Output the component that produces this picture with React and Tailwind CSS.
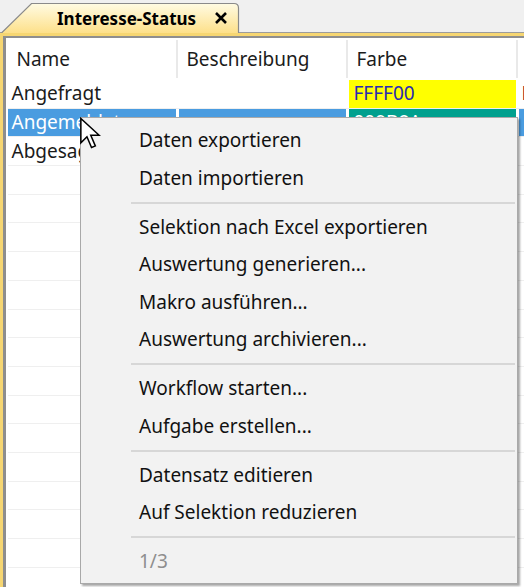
import React from "react";

const rows = [
  { name: "Angefragt", farbe: "FFFF00", cell: "bg-[#ffff00] text-[#2a2ab4]", extra: "FF", extraText: "text-[#7a0a24]" },
  { name: "Angemeldet", farbe: "009B8A", selected: true, cell: "bg-[#00a08e] text-white" },
  { name: "Abgesagt" },
];

const menu = [
  ["Daten exportieren", "Daten importieren"],
  [
    "Selektion nach Excel exportieren",
    "Auswertung generieren...",
    "Makro ausführen...",
    "Auswertung archivieren...",
  ],
  ["Workflow starten...", "Aufgabe erstellen..."],
  ["Datensatz editieren", "Auf Selektion reduzieren"],
];

const ContextMenu = () => (
  <div className="absolute left-[80px] top-[117px] w-[438px] h-[467px] bg-[#f2f2f2] border border-[#a9a9a9] shadow-[2px_2px_2px_rgba(0,0,0,0.35)] pt-[4px]">
    {menu.map((group, gi) => (
      <div key={gi}>
        {group.map((label) => (
          <div key={label} className="h-[37.5px] flex items-center pl-[58px] text-[#111]">
            {label}
          </div>
        ))}
        <div className="h-[11.5px] flex items-center ml-[50px] mr-[2px]">
          <div className="h-[2px] w-full bg-[#d7d7d7]" />
        </div>
      </div>
    ))}
    <div className="h-[37.5px] flex items-center pl-[58px] text-[#8e8e8e]">1/3</div>
  </div>
);

const Cursor = () => (
  <svg className="absolute left-[79px] top-[117px]" width="22" height="32" viewBox="0 0 14 21">
    <path
      d="M1 1 L1 17 L5 13 L8 20 L10.5 19 L7.5 12 L13 12 Z"
      fill="#fff"
      stroke="#000"
      strokeWidth="1"
      strokeLinejoin="miter"
    />
  </svg>
);

export default function App() {
  return (
    <div
      className="relative w-[524px] h-[587px] bg-[#f0f0f0] overflow-hidden text-[19px] leading-none"
      style={{ fontFamily: '"Noto Sans", "Open Sans", sans-serif' }}
    >
      {/* tab strip */}
      <div className="h-[32px] relative">
        <div className="absolute left-0 top-0 w-[242px] h-[33px]">
          <svg className="absolute inset-0" width="242" height="33" viewBox="0 0 242 33">
            <defs>
              <linearGradient id="tabFill" x1="0" y1="0" x2="0" y2="1">
                <stop offset="0" stopColor="#fffbe3" />
                <stop offset="1" stopColor="#fde08a" />
              </linearGradient>
            </defs>
            <path
              d="M1.5 33 L31.5 3.5 L234 3.5 Q238.5 3.5 238.5 8 L238.5 33"
              fill="url(#tabFill)"
              stroke="#8a8a8a"
              strokeWidth="1.2"
            />
          </svg>
          <div className="relative flex items-center h-full pt-[3px]">
            <span className="ml-[57px] text-[17px] font-bold text-black">Interesse-Status</span>
            <svg className="ml-[18px]" width="14" height="14" viewBox="0 0 14 14">
              <path d="M2 2 L12 12 M12 2 L2 12" stroke="#000" strokeWidth="2.6" />
            </svg>
          </div>
        </div>
      </div>

      {/* document frame */}
      <div className="h-px bg-[#9c9c9c]" />
      <div className="h-[3px] bg-[#f6d672]" />
      <div className="flex h-[551px]">
        <div className="w-[3px] bg-[#f6d672]" />
        <div className="flex-1 border-l-[3px] border-t-2 border-[#8e8e8e] bg-white pl-[1.5px] overflow-hidden">
          {/* header */}
          <div className="flex h-[42px] text-[#1b1b1b]">
            {["Name", "Beschreibung", "Farbe"].map((h) => (
              <div key={h} className="w-[170px] shrink-0 flex items-center py-[2px]">
                <span className="flex-1 pl-[9px]">{h}</span>
                <div className="w-[2px] h-full bg-[#e9e9e9]" />
              </div>
            ))}
            <div className="flex-1" />
          </div>

          {/* rows */}
          {Array.from({ length: 18 }).map((_, i) => {
            const r = rows[i] || {};
            const sel = r.selected;
            return (
              <div key={i} className="flex h-[28.7px] border-b-[1.5px] border-[#efefef]">
                <div className="w-[170px] shrink-0 pr-[2px]">
                  <div className={`h-full flex items-center pl-[4px] ${sel ? "bg-[#4a9ce0] text-white" : "text-[#1b1b1b]"}`}>
                    {r.name}
                  </div>
                </div>
                <div className="w-[170px] shrink-0 pl-px pr-[2px]">
                  <div className={`h-full ${sel ? "bg-[#4a9ce0]" : ""}`} />
                </div>
                <div className="w-[170px] shrink-0 pl-px pr-[2px]">
                  <div className={`h-full flex items-center pl-[5px] ${r.cell || ""}`}>{r.farbe}</div>
                </div>
                <div className="flex-1 pl-px">
                  <div className={`h-full flex items-center pl-[3px] whitespace-nowrap ${sel ? "bg-[#4a9ce0]" : ""} ${r.extraText || ""}`}>
                    {r.extra}
                  </div>
                </div>
              </div>
            );
          })}
        </div>
      </div>

      <ContextMenu />
      <Cursor />
    </div>
  );
}
